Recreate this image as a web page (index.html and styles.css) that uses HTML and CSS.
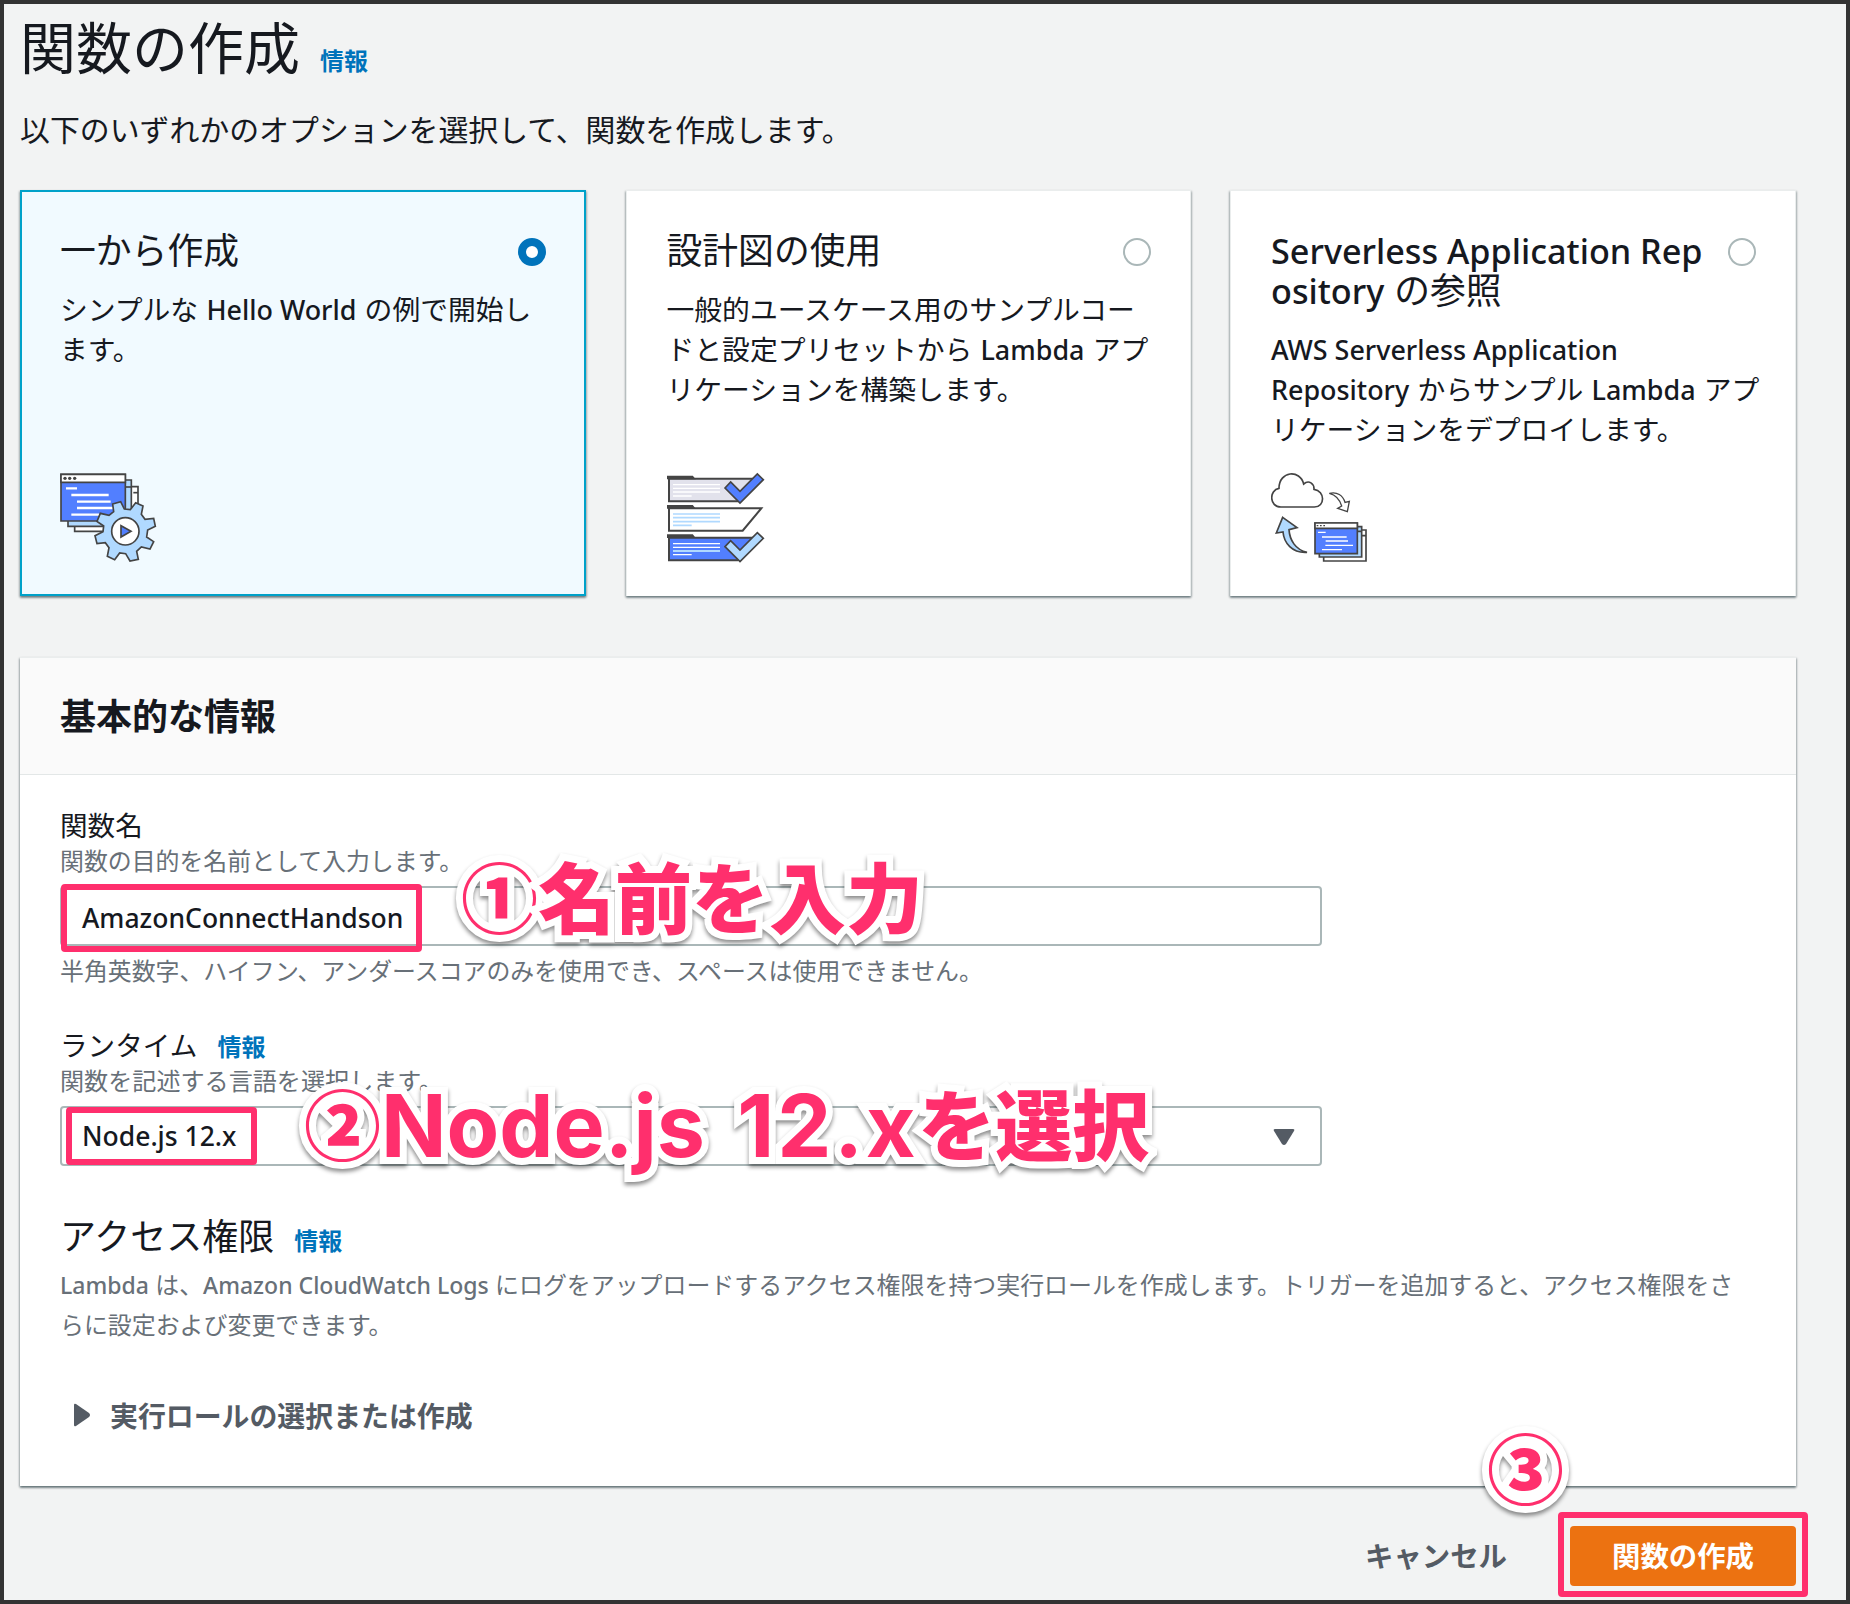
FILE: index.html
```html
<!DOCTYPE html>
<html lang="ja">
<head>
<meta charset="utf-8">
<title>関数の作成</title>
<link rel="stylesheet" href="styles.css">
</head>
<body>
<main class="page">
  <header class="page-head">
    <h1 class="page-title">関数の作成</h1>
    <a class="info">情報</a>
  </header>
  <p class="lead">以下のいずれかのオプションを選択して、関数を作成します。</p>

  <section class="options">
    <article class="card card-selected">
      <div class="card-head"><h2 class="card-title">一から作成</h2><span class="radio radio-on"></span></div>
      <p class="card-text">シンプルな <span class="latin">Hello World</span> の例で開始し<br>ます。</p>
      <svg class="card-icon" viewBox="60 66 294 276" stroke="#444" stroke-width="5">
        <path fill="#fff" d="M104 110h190v134H104z"/><path d="M280 128h14"/>
        <path fill="#b0d9ff" d="M84 90h190v139H84z"/><path d="M255 111h19"/>
        <path fill="#527fff" d="M63 73h193v140H63z"/>
        <path fill="#fff" d="M63 73h193v24H63z"/>
        <g fill="#444" stroke="none"><circle cx="75" cy="85" r="5"/><circle cx="89" cy="85" r="5"/><circle cx="104" cy="85" r="5"/></g>
        <path stroke="#fff" stroke-width="7" d="M78 115h33M94 135h112M111 155h101M111 174h112M94 194h84"/>
        <path fill="#b0d9ff" d="M218 162L242 155L253 177L271 179L287 158L309 168L304 193L315 208L341 205L346 229L323 240L320 261L341 275L330 297L304 291L290 304L295 328L270 333L257 311L239 309L224 329L202 319L207 293L196 278L171 281L165 257L189 245L191 228L171 214L181 190L207 196L221 185z"/>
        <circle cx="256" cy="244" r="41" fill="#fff"/>
        <path fill="#527fff" d="M243 227v34l30-17z"/>
      </svg>
    </article>
    <article class="card">
      <div class="card-head"><h2 class="card-title">設計図の使用</h2><span class="radio"></span></div>
      <p class="card-text">一般的ユースケース用のサンプルコー<br>ドと設定プリセットから <span class="latin">Lambda</span> アプ<br>リケーションを構築します。</p>
      <svg class="card-icon" viewBox="75 66 294 276" stroke="#444" stroke-width="6">
        <path fill="#e2e2ec" d="M81 86h265l-60 68H81z"/><path d="M78 80h73l4 5H78z" fill="#444"/>
        <path stroke="#fff" stroke-width="4" d="M93 104h141M93 115h141M93 126h141M93 138h56"/>
        <path fill="#527fff" stroke-width="5" d="M249 114l17-18 28 28 52-52 18 17-70 70z"/>
        <path fill="#fff" d="M81 175h277l-56 67H81z"/><path d="M78 168h73l4 5H78z" fill="#444"/>
        <path stroke="#b0d9ff" stroke-width="5" d="M93 192h141M93 203h141M93 215h141M93 226h56"/>
        <path fill="#527fff" d="M81 263h265l-60 68H81z"/><path d="M78 256h73l4 5H78z" fill="#444"/>
        <path stroke="#fff" stroke-width="4" d="M93 281h141M93 292h141M93 314h56"/><path stroke="#b0d9ff" d="M93 303h141"/>
        <path fill="#b0d9ff" stroke-width="5" d="M249 290l17-18 28 28 52-52 18 17-70 70z"/>
      </svg>
    </article>
    <article class="card">
      <div class="card-head"><h2 class="card-title"><span class="latin">Serverless Application Rep</span><br><span class="latin">ository</span> の参照</h2><span class="radio"></span></div>
      <p class="card-text"><span class="latin">AWS Serverless Application</span><br><span class="latin">Repository</span> からサンプル <span class="latin">Lambda</span> アプ<br>リケーションをデプロイします。</p>
      <svg class="card-icon" viewBox="60 66 294 276" stroke="#444" stroke-width="5">
        <path fill="#fff" d="M90 171C54 171 54 120 84 115C84 62 148 58 158 102C174 88 190 102 189 118C223 122 223 171 190 171z"/>
        <path fill="#fff" stroke-width="4" d="M235 130C258 124 276 136 282 157L295 154L289 185L260 175L272 168C266 148 255 135 235 130z"/>
        <path fill="#b0d9ff" d="M95 202L138 233L114 239C116 270 133 299 168 307C123 310 99 279 96 246L76 249z"/>
        <path fill="#fff" d="M218 240h127v93H218zM332 257h13"/>
        <path fill="#b0d9ff" d="M205 230h127v91H205zM319 244h13"/>
        <path fill="#527fff" d="M192 219h127v92H192z"/><path fill="#fff" d="M192 219h127v16H192z"/>
        <path stroke-width="4" stroke-dasharray="5 5" d="M197 227h25"/>
        <path stroke="#fff" stroke-width="4" d="M201 247h23M213 261h74M224 273h67M223 286h83M213 299h60"/>
      </svg>
    </article>
  </section>

  <section class="panel">
    <header class="panel-head"><h2 class="panel-title">基本的な情報</h2></header>
    <div class="panel-body">
      <div class="field">
        <label class="label">関数名</label>
        <p class="hint">関数の目的を名前として入力します。</p>
        <div class="control"><span class="latin">AmazonConnectHandson</span></div>
        <p class="hint hint-below">半角英数字、ハイフン、アンダースコアのみを使用でき、スペースは使用できません。</p>
      </div>
      <div class="field field-runtime">
        <div class="label-row"><label class="label">ランタイム</label><a class="info">情報</a></div>
        <p class="hint hint-runtime">関数を記述する言語を選択します。</p>
        <div class="control"><span class="latin">Node.js 12.x</span>
          <svg class="caret" viewBox="0 0 22 18"><path fill="#545b64" d="M2 1h18q2 0 1 2l-8 13q-2 2-4 0L1 3q-1-2 1-2z"/></svg>
        </div>
      </div>
      <div class="access-head"><h3 class="access-title">アクセス権限</h3><a class="info">情報</a></div>
      <p class="access-text"><span class="latin">Lambda</span> は、<span class="latin">Amazon CloudWatch Logs</span> にログをアップロードするアクセス権限を持つ実行ロールを作成します。トリガーを追加すると、アクセス権限をさ<br>らに設定および変更できます。</p>
      <div class="expander">
        <svg class="expander-icon" viewBox="0 0 18 24"><path fill="#545b64" d="M1 2q0-2 2-1l13 9q2 2 0 4L3 23q-2 1-2-1z"/></svg>
        <span>実行ロールの選択または作成</span>
      </div>
    </div>
  </section>

  <footer class="actions">
    <button class="btn">キャンセル</button>
    <button class="btn btn-primary">関数の作成</button>
  </footer>

  <div class="mark mark-name"></div>
  <div class="mark mark-runtime"></div>
  <div class="mark mark-submit"></div>
  <div class="note note-name"><span class="num">①</span>名前を入力</div>
  <div class="note note-runtime"><span class="num">②</span><span class="note-latin">Node.js <span class="note-version">12.x</span></span>を選択</div>
  <div class="note note-submit"><span class="num">③</span></div>
</main>
</body>
</html>
```

FILE: styles.css
```css
* { box-sizing: border-box; }
body { margin: 0; }
h1, h2, h3, p { margin: 0; font-weight: 400; }

.page {
  position: relative;
  width: 1850px;
  height: 1604px;
  padding: 12px 49px 0 16px;
  border: 4px solid #333;
  background: #f2f3f3;
  color: #16191f;
  font-family: "Noto Sans CJK JP", sans-serif;
  font-size: 27.8px;
  overflow: hidden;
  white-space: nowrap;
}
.latin {
  font-family: "Noto Sans", "Open Sans", sans-serif;
  font-weight: 500;
  line-height: 1;
  word-spacing: 0;
}
.info { color: #0073bb; font-size: 24px; font-weight: 700; line-height: 30px; }

.page-head { display: flex; gap: 20px; height: 60px; }
.page-title { font-size: 56px; line-height: 58px; }
.page-head .info { padding-top: 29px; }
.lead { margin-top: 30px; font-size: 29.9px; line-height: 44px; }

.options { display: grid; grid-template-columns: 566px 565px 566px; gap: 39.5px; margin-top: 40px; }
.card {
  display: flex;
  flex-direction: column;
  height: 406px;
  padding: 37px 40px 32px;
  background: #fff;
  border: 1px solid #eaeded;
  border-bottom: 0;
  box-shadow: 0 2px 2px rgba(0, 28, 36, .35), 1px 1px 2px rgba(0, 28, 36, .2), -1px 1px 2px rgba(0, 28, 36, .2);
}
.card-selected { background: #f1faff; border: 2px solid #00a1c9; padding: 36px 39px 30px 38px; }
.card-head { display: flex; justify-content: space-between; align-items: flex-start; }
.card-title { font-size: 35.8px; line-height: 40px; word-spacing: 2px; }
.card-title .latin { font-size: 34.2px; }
.radio { flex: none; width: 28px; height: 28px; margin: 10px -1px 0 0; border: 2px solid #aab7b8; border-radius: 50%; background: #fff; }
.radio-on { border: 8px solid #0073bb; }
.card-text { margin-top: 20px; line-height: 40px; word-spacing: 2px; }
.card-text .latin { font-size: 26.9px; }
.card-icon { width: 98px; height: 92px; margin: auto 0 0; fill: none; }

.panel { width: 1776px; height: 829px; margin-top: 61px; background: #fff; box-shadow: 0 2px 2px rgba(0, 28, 36, .4), 1px 1px 2px rgba(0, 28, 36, .2), -1px 1px 2px rgba(0, 28, 36, .2); }
.panel-head { height: 118px; padding: 36px 40px; background: #fafafa; border-top: 1px solid #eaeded; border-bottom: 1px solid #e3e7e7; }
.panel-title { font-size: 36px; font-weight: 700; line-height: 40px; }
.panel-body { padding: 29px 40px; }
.field { width: 1262px; }
.label { display: block; font-size: 27.6px; line-height: 40px; }
.label-row { display: flex; align-items: center; gap: 20px; }
.label-row .info { line-height: 40px; padding-top: 2px; height: 40px; }
.hint { color: #687078; font-size: 23.9px; line-height: 32px; }
.hint-runtime { font-size: 24.1px; }
.control { display: flex; align-items: center; justify-content: space-between; height: 60px; margin-top: 10px; padding: 4px 25px 0 20px; border: 2px solid #aab7b8; border-radius: 4px; font-size: 26.5px; }
.hint-below { margin-top: 8px; }
.field-runtime { margin-top: 38px; }
.field-runtime .control { padding-top: 1px; }
.caret { width: 22px; height: 18px; }
.access-head { display: flex; gap: 20px; margin-top: 47px; }
.access-title { font-size: 36px; line-height: 42px; }
.access-head .info { padding-top: 12px; }
.access-text { margin-top: 9px; color: #687078; font-size: 23.93px; line-height: 39.5px; word-spacing: 1px; }
.access-text .latin { font-size: 23px; }
.expander { display: flex; align-items: center; gap: 19px; margin-top: 52px; padding-left: 13px; color: #545b64; font-size: 27.9px; font-weight: 700; line-height: 40px; }
.expander-icon { width: 18px; height: 24px; }

.actions { display: flex; justify-content: flex-end; gap: 22px; margin-top: 40px; }
.btn { height: 60px; padding: 0 41px 3px; border: 0; border-radius: 4px; background: none; color: #545b64; font: 700 28.4px/57px "Noto Sans CJK JP", sans-serif; }
.btn-primary { width: 226px; margin-right: 1px; padding: 0 0 3px; background: #ec7211; color: #fff; }

/* Annotations drawn over the form */
.mark { position: absolute; border: 6px solid #ff2f6d; border-radius: 4px; }
.mark-name { left: 57px; top: 880px; width: 361px; height: 68px; }
.mark-runtime { left: 62px; top: 1103px; width: 191px; height: 58px; }
.mark-submit { left: 1554px; top: 1508px; width: 250px; height: 85px; }
.note {
  position: absolute;
  display: flex;
  color: #ff2f6d;
  font-size: 77px;
  font-weight: 900;
  line-height: 90px;
  -webkit-text-stroke: 14px #fff;
  paint-order: stroke fill;
  filter: drop-shadow(0 3px 2px rgba(0, 0, 0, .45));
}
.note-name { left: 457px; top: 846px; }
.note-runtime { left: 300px; top: 1073px; }
.note-submit { left: 1483px; top: 1417px; }
.note-latin { padding-top: 4px; font-family: "Inter", sans-serif; font-size: 86px; font-weight: 700; white-space: pre; word-spacing: 12px; }
.note-version { letter-spacing: 2.8px; }
```
